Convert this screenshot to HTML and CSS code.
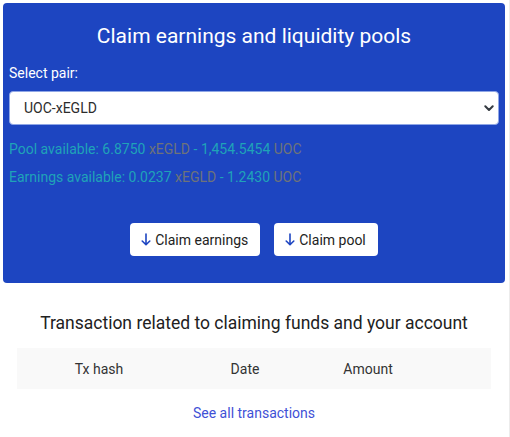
FILE: index.html
```html
<!DOCTYPE html>
<html>
<head>
<meta charset="utf-8">
<link rel="stylesheet" href="styles.css">
</head>
<body>
<div class="page">
  <section class="card">
    <h1 class="title">Claim earnings and liquidity pools</h1>
    <label class="label">Select pair:</label>
    <div class="select">
      <span>UOC-xEGLD</span>
      <svg class="chev" width="10" height="7" viewBox="0 0 10 7"><path d="M1.3 1.3 L5 5 L8.7 1.3" fill="none" stroke="#343a40" stroke-width="2" stroke-linecap="round" stroke-linejoin="round"/></svg>
    </div>
    <p class="info">Pool available: 6.8750 <span class="unit">xEGLD</span> - 1,454.5454 <span class="unit">UOC</span></p>
    <p class="info">Earnings available: 0.0237 <span class="unit">xEGLD</span> - 1.2430 <span class="unit">UOC</span></p>
    <div class="actions">
      <button class="btn"><svg class="arrow" width="10" height="13" viewBox="0 0 10 13"><path d="M5 1 V11.8 M1.2 8 L5 11.8 L8.8 8" fill="none" stroke="#1d45c1" stroke-width="1.6" stroke-linecap="round" stroke-linejoin="round"/></svg>Claim earnings</button>
      <button class="btn"><svg class="arrow" width="10" height="13" viewBox="0 0 10 13"><path d="M5 1 V11.8 M1.2 8 L5 11.8 L8.8 8" fill="none" stroke="#1d45c1" stroke-width="1.6" stroke-linecap="round" stroke-linejoin="round"/></svg>Claim pool</button>
    </div>
  </section>
  <section class="tx">
    <h2 class="tx-title">Transaction related to claiming funds and your account</h2>
    <div class="table-head">
      <div>Tx hash</div>
      <div>Date</div>
      <div>Amount</div>
      <div></div>
    </div>
    <a class="all" href="#">See all transactions</a>
  </section>
</div>
</body>
</html>
```
FILE: styles.css
```css
* { box-sizing: border-box; }
html, body { margin: 0; padding: 0; background: #fff; }
body {
  font-family: Roboto, "Liberation Sans", sans-serif;
  border-right: 1px solid #ececec;
  width: 510px;
  height: 437px;
  overflow: hidden;
}
.page { padding: 3px 4px 0 3px; }
.card {
  background: #1d45c1;
  border-radius: 4px;
  height: 280px;
  padding: 21px 6px 0 6px;
  color: #fff;
}
.title {
  margin: 0;
  font-weight: 400;
  font-size: 21px;
  line-height: 25px;
  text-align: center;
}
.label {
  display: block;
  margin-top: 16px;
  font-size: 14px;
  line-height: 17px;
}
.select {
  margin-top: 9px;
  height: 34px;
  background: #fff;
  border: 1px solid #8fa6e6;
  border-radius: 4px;
  display: flex;
  align-items: center;
  justify-content: space-between;
  padding: 0 4px 0 14px;
  color: #2c2c2c;
  font-size: 14px;
}
.chev { display: block; }
.info {
  margin: 16px 0 0 0;
  font-size: 14px;
  line-height: 17px;
  color: #1fa3b8;
}
.info + .info { margin-top: 11px; }
.unit { color: #6e737a; }
.actions {
  margin-top: 37px;
  display: flex;
  justify-content: center;
  gap: 14px;
}
.btn {
  background: #fff;
  border: none;
  border-radius: 4px;
  height: 33px;
  padding: 0 12px 0 11px;
  display: flex;
  align-items: center;
  gap: 4px;
  font-family: Roboto, "Liberation Sans", sans-serif;
  font-size: 14px;
  color: #222;
}
.arrow { display: block; }
.tx { padding: 0 14px 0 14px; }
.tx-title {
  margin: 29px 0 0 0;
  font-weight: 400;
  font-size: 17.5px;
  line-height: 22px;
  text-align: center;
  color: #212121;
}
.table-head {
  margin-top: 14px;
  background: #f9f9f9;
  height: 41px;
  display: grid;
  grid-template-columns: 164px 128px 118px 1fr;
  align-items: center;
  text-align: center;
  font-size: 14px;
  color: #333;
}
.all {
  display: block;
  margin-top: 16px;
  text-align: center;
  font-size: 14px;
  color: #3f51d6;
  text-decoration: none;
}
```
